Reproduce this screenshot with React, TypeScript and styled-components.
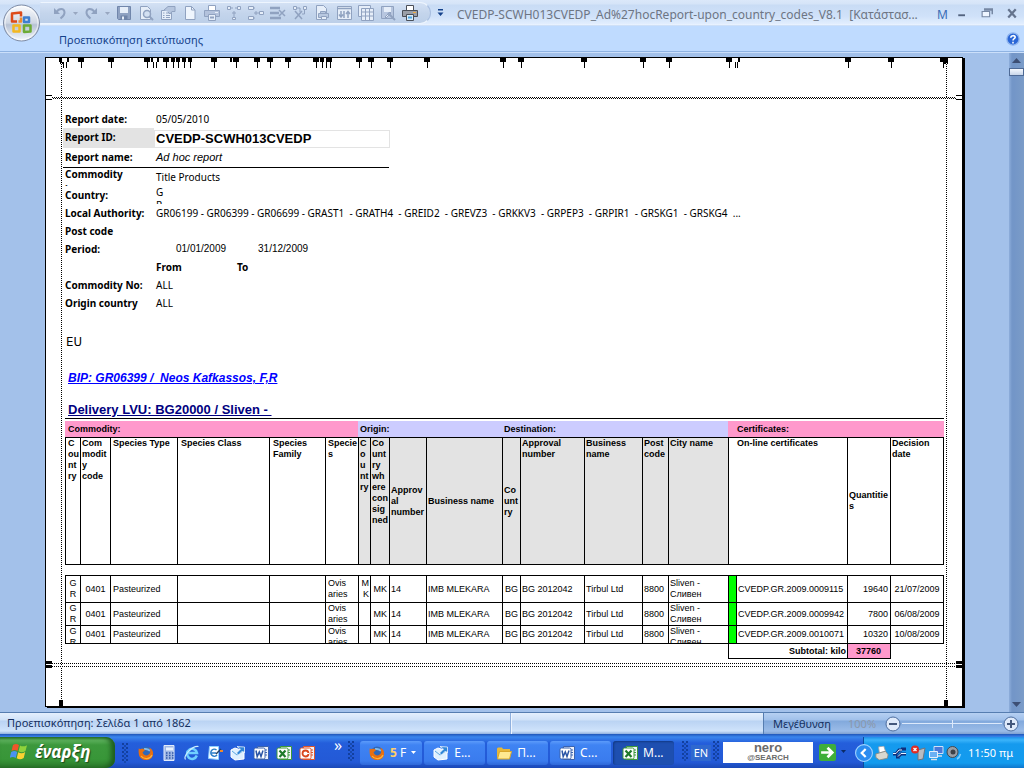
import React from "react";
import styled, { createGlobalStyle } from "styled-components";

const ui = `"Noto Sans", "Open Sans", sans-serif`;
const sans = `"Liberation Sans", Arial, sans-serif`;
const PINK = "#ff99cc";
const LAVENDER = "#ccccff";
const GREY = "#e3e3e3";

const Global = createGlobalStyle`
  *, *::before, *::after { box-sizing: border-box; }
  body { margin: 0; font-family: ${ui}; font-size: 11px; color: #000; }
  button { border: 0; padding: 0; background: none; font: inherit; color: inherit; }
  a { color: inherit; }
`;

const App = styled.div`
  min-height: 100vh;
  display: flex;
  flex-direction: column;
  background: #a3c1ea;
`;

/* ---------- window header ---------- */

const Header = styled.header`
  position: relative;
  background: #bfdbff;
`;

const TitleBar = styled.div`
  height: 26px;
  display: flex;
  align-items: center;
  padding-left: 40px;
  background: linear-gradient(#dbe8fa 0, #d5e4f8 4px, #c9dcf5 5px, #cfe1f9 16px, #e2eefe 24px, #eef5ff 25px, #b0cbef 26px);
`;

const QuickAccess = styled.div`
  height: 22px;
  display: flex;
  align-items: center;
  padding: 0 9px 0 10px;
  background: linear-gradient(#d3e1f4, #c4d5ec 50%, #bccfe8);
  border: 1px solid #a9bfe0;
  border-color: #eef5fe #a9bfe0 #eef5fe transparent;
  border-radius: 0 11px 11px 0;
`;

const ToolButton = styled.button<{ $w?: number }>`
  width: ${(p) => p.$w ?? 22}px;
  height: 18px;
  display: flex;
  align-items: center;
  justify-content: center;
`;

const Overflow = styled.button`
  width: 18px;
  height: 20px;
  display: flex;
  align-items: center;
  justify-content: center;
`;

const WindowTitle = styled.div`
  flex: 1;
  min-width: 0;
  display: flex;
  justify-content: space-between;
  padding: 4px 0 0 8px;
  color: #6d7583;
  font-size: 12px;
  line-height: 20px;
  white-space: pre;
  overflow: hidden;
`;

const AppName = styled.span`
  color: #3a6db5;
  width: 12px;
  overflow: hidden;
`;

const WindowButtons = styled.div`
  display: flex;
  width: 75px;
  justify-content: space-around;
`;

const Orb = styled.button`
  position: absolute;
  left: 2px;
  top: 3px;
  width: 40px;
  height: 40px;
`;

const TabRow = styled.nav`
  height: 26px;
  display: flex;
  align-items: center;
  justify-content: space-between;
  padding: 0 4px 0 59px;
  color: #15428b;
  border-bottom: 1px solid #8fb3e2;
  box-shadow: 0 1px 0 #cbdffa;
`;

const Tab = styled.button`
  line-height: 16px;
  padding-top: 3px;
`;

const HelpButton = styled.button`
  width: 14px;
  height: 14px;
  display: flex;
`;

/* ---------- preview workspace ---------- */

const Workspace = styled.main`
  flex: 1;
  display: flex;
`;

const Sheet = styled.section`
  position: relative;
  flex: 1;
  margin: 5px 46px 5px 45px;
  background: #fff;
  border: 1px solid #000;
  box-shadow: 2px 1px 0 #000;
  padding: 53px 18px 46px 17px;
`;

const VGuide = styled.i<{ $side: "left" | "right" }>`
  position: absolute;
  top: 4px;
  bottom: 0;
  width: 1px;
  ${(p) => p.$side}: 15px;
  background: repeating-linear-gradient(#000 0 1px, #fff 1px 2px);
  &::after {
    content: "";
    position: absolute;
    left: -2px;
    bottom: 0;
    width: 4px;
    height: 6px;
    background: #000;
  }
`;

const HGuide = styled.i<{ $shift?: boolean }>`
  display: block;
  height: 1px;
  background: repeating-linear-gradient(90deg, #000 0 1px, #fff 1px 2px);
  background-position-x: ${(p) => (p.$shift ? 1 : 0)}px;
`;

const TopGuides = styled.div`
  position: absolute;
  top: 37px;
  left: 0;
  right: 0;
  height: 5px;
  padding: 2px 6px 0;
  &::before,
  &::after {
    content: "";
    position: absolute;
    top: 0;
    left: 0;
    width: 6px;
    height: 5px;
    border: solid #000;
    border-width: 1px 0;
  }
  &::after {
    left: auto;
    right: 0;
  }
`;

const BottomGuides = styled.div`
  position: absolute;
  bottom: 38px;
  left: 0;
  right: 0;
  height: 7px;
  display: flex;
  flex-direction: column;
  gap: 2px;
  padding: 2px 6px 0;
  &::before,
  &::after {
    content: "";
    position: absolute;
    top: 0;
    left: 0;
    width: 6px;
    height: 7px;
    border: solid #000;
    border-width: 3px 0;
  }
  &::after {
    left: auto;
    right: 0;
  }
`;

const Ruler = styled.svg`
  position: absolute;
  left: 0;
  top: 0;
`;

const ScrollBar = styled.div`
  width: 15px;
  display: flex;
  flex-direction: column;
  justify-content: space-between;
  align-items: center;
  background: linear-gradient(90deg, #8eaedb 0, #7396c8 3px, #7396c8 5px, #7b9cc8 15px);
`;

const ScrollButton = styled.button`
  width: 15px;
  height: 16px;
  display: flex;
  align-items: center;
  justify-content: center;
`;

const ScrollThumb = styled.div`
  width: 15px;
  height: 8px;
  background: linear-gradient(#f4f8fe, #c8d6ea);
  border: 1px solid #4e6a96;
`;

/* ---------- report ---------- */

const Info = styled.dl`
  margin: 0;
  font-size: 10px;
`;

const InfoRow = styled.div<{ $h?: number }>`
  display: grid;
  grid-template-columns: 91px 1fr;
  height: ${(p) => p.$h ?? 18}px;
  line-height: ${(p) => p.$h ?? 18}px;
`;

const InfoHead = styled.div`
  width: 326px;
  border-bottom: 1px solid #000;
`;

const Label = styled.dt<{ $shade?: boolean }>`
  padding-left: 2px;
  font-weight: bold;
  white-space: nowrap;
  background: ${(p) => (p.$shade ? GREY : "none")};
`;

const Value = styled.dd`
  margin: 0;
  padding-left: 2px;
  white-space: pre;
`;

const ReportId = styled(Value)`
  margin: 2px -1px 0 0;
  padding-left: 1px;
  border: 1px solid ${GREY};
  font: bold 13px/16px ${sans};
`;

const ReportName = styled(Value)`
  font-family: ${sans};
  font-size: 11px;
  font-style: italic;
`;

const Clipped = styled.div`
  height: 18px;
  overflow: hidden;
  line-height: 13px;
`;

const Dates = styled(Value)`
  display: flex;
  font-family: ${sans};
  padding-left: 22px;
  gap: 32px;
`;

const FromTo = styled(Value)`
  display: grid;
  grid-template-columns: 81px 1fr;
  font-weight: bold;
`;

const Region = styled.h2`
  margin: 20px 0 0 3px;
  font: 13px/20px "DejaVu Sans Condensed", "DejaVu Sans", sans-serif;
`;

const Bip = styled.a`
  display: block;
  margin: 16px 0 0 5px;
  color: #0000ff;
  font: italic bold 12px/20px ${sans};
  white-space: pre;
`;

const Delivery = styled.h3`
  margin: 14px 0 0 5px;
  color: #000080;
  font: bold 13px/16px ${sans};
  text-decoration: underline;
  white-space: pre;
`;

const DataTable = styled.table`
  margin-left: 2px;
  width: calc(100% - 2px);
  table-layout: fixed;
  border-spacing: 0;
  border-top: 1px solid #000;
  padding-top: 2px;
  font: 9px/11px ${sans};
  th,
  td {
    padding: 0;
  }
`;

const Band = styled.th<{ $bg: string; $pad?: number }>`
  height: 16px;
  text-align: left;
  background: ${(p) => p.$bg};
  && {
    padding-left: ${(p) => p.$pad ?? 2}px;
  }
`;

const HeadCell = styled.th<{ $shade?: boolean; $mid?: boolean; $pad?: number }>`
  height: 128px;
  border: solid #000;
  border-width: 1px 0 1px 1px;
  text-align: left;
  white-space: nowrap;
  vertical-align: ${(p) => (p.$mid ? "middle" : "top")};
  background: ${(p) => (p.$shade ? GREY : "#fff")};
  && {
    padding-left: ${(p) => p.$pad ?? 1}px;
  }
  &:last-child {
    border-right-width: 1px;
  }
`;

const Spacer = styled.td`
  height: 10px;
`;

const DataRow = styled.tr<{ $h: number }>`
  td {
    height: ${(p) => p.$h}px;
  }
  &:nth-last-child(2) td {
    border-bottom: 1px solid #000;
  }
`;

const Cell = styled.td<{ $align?: "left" | "center" | "right"; $pad?: number; $bg?: string }>`
  border-top: 1px solid #000;
  border-left: 1px solid #000;
  text-align: ${(p) => p.$align ?? "left"};
  white-space: nowrap;
  vertical-align: middle;
  background: ${(p) => p.$bg ?? "#fff"};
  && {
    padding: 0 ${(p) => p.$pad ?? 1}px;
  }
  &:last-child {
    border-right: 1px solid #000;
  }
`;

const Clip = styled.div<{ $max: number }>`
  max-height: ${(p) => p.$max}px;
  overflow: hidden;
`;

const Total = styled.td<{ $bg?: string; $align: "right" | "center" }>`
  height: 15px;
  border-left: 1px solid #000;
  border-bottom: 1px solid #000;
  font-weight: bold;
  text-align: ${(p) => p.$align};
  background: ${(p) => p.$bg ?? "#fff"};
  && {
    padding-right: 1px;
  }
`;

const AfterTotal = styled.td`
  border-left: 1px solid #000;
`;

/* ---------- status bar ---------- */

const StatusBar = styled.footer`
  height: 22px;
  display: flex;
  border-top: 1px solid #567db0;
  color: #15305f;
  line-height: 20px;
  background: linear-gradient(#e4effd 0, #d0e2f8 7px, #bad3f3 8px, #cfe3fb 18px, #8fb0de 21px);
`;

const StatusText = styled.div`
  flex: 2 1 0;
  padding-left: 7px;
  border-right: 1px solid #8fb0de;
`;

const StatusGap = styled.div`
  flex: 1 1 0;
  box-shadow: inset 1px 0 #eef5ff;
`;

const ZoomPane = styled.div`
  flex: 0 0 261px;
  display: flex;
  align-items: center;
  padding: 0 5px 0 9px;
  border-left: 1px solid #567db0;
  background: linear-gradient(#b6d0f2 0, #a0c0ea 7px, #82a9dc 8px, #9bbce8 18px, #7d9fd0 21px);
  gap: 1px;
`;

const ZoomLabel = styled.label`
  width: 74px;
`;

const ZoomValue = styled.output`
  width: 36px;
  color: #8b98ab;
`;

const RoundButton = styled.button`
  width: 16px;
  height: 16px;
  display: flex;
`;

const Slider = styled.input`
  flex: 1;
  width: 0;
  min-width: 0;
  margin: 0;
  height: 10px;
  appearance: none;
  background:
    linear-gradient(#dce9fb, #dce9fb) center / 1px 8px no-repeat,
    linear-gradient(#dce9fb, #dce9fb) center / 100% 1px no-repeat;
  &::-webkit-slider-thumb {
    appearance: none;
    width: 1px;
    height: 1px;
    opacity: 0;
  }
`;

/* ---------- taskbar ---------- */

const Taskbar = styled.div`
  height: 34px;
  display: flex;
  align-items: center;
  color: #fff;
  background: linear-gradient(#1f55b8 0, #3a86ee 3px, #2f72e4 6px, #245edb 9px, #2359d6 28px, #1a48b6 34px);
`;

const Start = styled.button`
  align-self: stretch;
  width: 115px;
  margin-top: 3px;
  display: flex;
  align-items: center;
  gap: 6px;
  padding: 0 0 2px 10px;
  border-radius: 0 9px 9px 0;
  background: linear-gradient(#2f7a2f 0, #5eb35e 3px, #3c983c 8px, #389638 22px, #2b7a2b 31px);
  box-shadow: inset -4px 0 5px #1e5c1e;
  font: italic bold 17px/24px ${ui};
  text-shadow: 1px 1px 1px #1c4a1c;
`;

const Grip = styled.i`
  flex: none;
  width: 6px;
  height: 20px;
  background:
    radial-gradient(circle at 1px 1px, #123f9e 1px, transparent 1px) 0 0 / 4px 4px,
    radial-gradient(circle at 3px 3px, #1749ae 1px, transparent 1px) 0 0 / 4px 4px;
`;

const Launch = styled.div`
  flex: none;
  display: flex;
  align-items: center;
  width: 213px;
  padding: 3px 0 0 7px;
`;

const LaunchButton = styled.button`
  width: 23px;
  height: 18px;
  display: flex;
  justify-content: center;
  align-items: center;
  &:first-of-type {
    margin-left: 6px;
  }
`;

const Chevron = styled.button`
  width: 20px;
  font-size: 16px;
  line-height: 12px;
  padding-bottom: 12px;
`;

const Tasks = styled.div`
  flex: 1;
  display: flex;
  gap: 2px;
  padding: 3px 0 0 6px;
  margin-right: 8px;
  max-width: 320px;
`;

const Task = styled.button<{ $active?: boolean }>`
  flex: 1;
  height: 24px;
  display: flex;
  align-items: center;
  gap: 5px;
  padding: 0 6px 0 9px;
  border-radius: 3px;
  white-space: nowrap;
  font-size: 12px;
  background: ${(p) =>
    p.$active ? "#1e4fb0" : "linear-gradient(#5c9bfa 0, #3f83f3 4px, #3a7bee 20px, #2f68d8 24px)"};
  box-shadow: ${(p) => (p.$active ? "inset 1px 1px 2px #123a86" : "none")};
  svg:last-child:not(:first-child) {
    margin-left: auto;
  }
`;

const Count = styled.b`
  color: #ffcf6b;
`;

const Lang = styled.button`
  width: 20px;
  margin: 3px 2px 0 3px;
  line-height: 16px;
  background: #2f68cf;
`;

const Nero = styled.a`
  width: 90px;
  height: 21px;
  margin: 3px 6px 0 4px;
  display: flex;
  flex-direction: column;
  align-items: center;
  justify-content: center;
  background: #fff;
  color: #6b6b6b;
  text-decoration: none;
  font: bold 13px/10px ${sans};
  small {
    font-size: 8px;
    line-height: 9px;
  }
`;

const GreenGo = styled.button`
  width: 17px;
  height: 17px;
  display: flex;
  margin-top: 3px;
`;

const GoMenu = styled.button`
  width: 14px;
  height: 16px;
  display: flex;
  align-items: center;
  justify-content: center;
`;

const Tray = styled.div`
  align-self: stretch;
  flex: 0 0 161px;
  margin-left: auto;
  margin-top: 3px;
  display: flex;
  align-items: center;
  border-left: 1px solid #0d4a9c;
  background: linear-gradient(#1f8ee8 0, #3bb4fa 3px, #159aee 7px, #129bee 26px, #0f76cc 31px);
`;

const TrayArrow = styled.button`
  width: 18px;
  height: 18px;
  margin-left: -9px;
  display: flex;
`;

const TrayIcon = styled.span`
  width: 18px;
  display: flex;
  justify-content: center;
`;

const Clock = styled.time`
  margin-left: 5px;
  white-space: nowrap;
`;

/* ---------- drawings ---------- */

type Kids = { children: React.ReactNode; s?: number };
const Svg = ({ children, s = 16 }: Kids) => (
  <svg width={s} height={s} viewBox="0 0 16 16" fill="none" aria-hidden="true">
    {children}
  </svg>
);

const Caret = ({ color = "#98a7c0" }: { color?: string }) => (
  <svg width="5" height="3" viewBox="0 0 5 3" aria-hidden="true">
    <path d="M0 0h5L2.500 3z" fill={color} />
  </svg>
);

const g = "#90a2c0";
const lite = "#e6eef9";

const UndoIcon = () => (
  <Svg>
    <path d="M2 3v6h6z" fill={g} />
    <path d="M4.500 7C7 3 12 3 12.500 7c.3 3-1.500 4.500-4 6.500" stroke={g} strokeWidth="2" />
  </Svg>
);
const RedoIcon = () => (
  <Svg>
    <path d="M14 3v6H8z" fill={g} />
    <path d="M11.500 7C9 3 4 3 3.500 7c-.3 3 1.500 4.500 4 6.500" stroke={g} strokeWidth="2" />
  </Svg>
);
const SaveIcon = () => (
  <Svg>
    <path d="M1.500 1.500h13v13h-12l-1-1z" fill="#8fa2c2" stroke="#7186ab" />
    <path d="M4 2h8v6H4z" fill={lite} />
    <path d="M4.500 10.500h7v4h-7z" fill="#6f84a8" />
    <path d="M6 11.500h2v3H6z" fill={lite} />
  </Svg>
);
const PreviewIcon = () => (
  <Svg>
    <path d="M2.500 1.500h7l3 3v10h-10z" fill={lite} stroke={g} />
    <circle cx="9" cy="9" r="3.500" fill="#d3e0f2" stroke={g} strokeWidth="1.500" />
    <path d="m11.500 11.500 3.500 3.500" stroke={g} strokeWidth="2" />
  </Svg>
);
const PropsIcon = () => (
  <Svg>
    <path d="M1.500 5.500h10v9h-10z" fill={lite} stroke={g} />
    <path d="M3 8h1.500M6 8h4M3 10.500h1.500M6 10.500h4M3 12.500h1.500M6 12.500h4" stroke={g} />
    <path d="M4 5 8 1.500h7v5h-3L10 9 8 7" fill="#b5c5de" stroke={g} />
  </Svg>
);
const PageIcon = () => (
  <Svg>
    <path d="M3.500 1.500h6l3.500 3.500v9.500H3.500z" fill="#eff5fd" stroke={g} />
    <path d="M9.500 1.500V5H13" stroke={g} />
  </Svg>
);
const PrinterIcon = ({ dark = false }: { dark?: boolean }) => {
  const c = dark ? "#4a4f58" : g;
  return (
    <Svg>
      <path d="M4.500 .5h7V6h-7z" fill="#fff" stroke={c} />
      <path d="M.5 5.500h15v6H.5z" fill={dark ? "#9a9fa8" : "#b3c2dc"} stroke={c} />
      <path d="M4.500 9.500h7v6h-7z" fill={dark ? "#d9edfb" : lite} stroke={c} />
      <path d="M11 7.500h3" stroke={dark ? "#f0a83c" : lite} />
      <path d="M6 12.500h4" stroke={dark ? "#4aa3e0" : g} strokeWidth="2" />
    </Svg>
  );
};
const SplitDown = () => (
  <Svg>
    <path d="M1.500 1.500h3v3h-3zM11.500 1.500h3v3h-3zM6.500 12.500h3v2h-3z" fill={lite} stroke={g} />
    <path d="M4.500 3H7M9 3h2.500M8 6v6M6 8h4" stroke={g} />
  </Svg>
);
const SplitRight = () => (
  <Svg>
    <path d="M.5 1.500h5v3h-5zM.5 11.500h5v3h-5zM11.500 6.500h4v3h-4z" fill={lite} stroke={g} />
    <path d="M5.500 3H7M5.500 13H7M6 8h5M8 6v4" stroke={g} />
  </Svg>
);
const DeleteRow = () => (
  <Svg>
    <path d="M0 3h10M0 8h9M0 13h11" stroke={g} strokeWidth="2.500" />
    <path d="m9 5 6 6m0-6-6 6" stroke={g} strokeWidth="1.500" />
  </Svg>
);
const DeleteCol = () => (
  <Svg>
    <path d="M1.500 1.500h3v3h-3zM11.500 1.500h3v3h-3z" fill={lite} stroke={g} />
    <path d="m3 6 7 8m0-8-7 8" stroke={g} strokeWidth="1.500" />
    <path d="M4.500 3H8v4M12.500 5v4H10" stroke={g} />
  </Svg>
);
const PagePrint = () => (
  <Svg>
    <path d="M2.500 .5h7l3 3v11h-10z" fill={lite} stroke={g} />
    <path d="M6.500 6.500h5v2h-5zM4.500 8.500h10v4h-10z" fill="#b8c8e0" stroke={g} />
    <path d="M7.500 11.500h5v3h-5z" fill={lite} stroke={g} />
  </Svg>
);
const ChartIcon = () => (
  <Svg>
    <path d="M1.500 1.500h14v13h-14z" fill={lite} stroke={g} />
    <path d="M2 3.500h13M5 6v6M3 9.500 5 12l2-2.500M8 6v7M12 13V7M10 9l2-2.500L14 9" stroke={g} strokeWidth="1.500" />
  </Svg>
);
const GridIcon = () => (
  <Svg>
    <path d="M.5 .5h12v11H.5z" fill={lite} stroke={g} />
    <path d="M3.500 3.500h12v12h-12z" fill={lite} stroke={g} />
    <path d="M3.500 7h12M3.500 11h12M7.500 3.500v12M11.500 3.500v12" stroke={g} />
  </Svg>
);
const DesignIcon = () => (
  <Svg>
    <path d="M1.500 1.500h12v12h-12z" fill="#b7c6df" stroke={g} />
    <path d="M4 2h7v5H4z" fill={lite} />
    <path d="m5 12 5-5 1 1-5 5z" fill={lite} stroke={g} />
    <path d="m8 8 7 7" stroke={g} strokeWidth="2" />
  </Svg>
);

const OfficeOrb = () => (
  <svg width="40" height="40" viewBox="0 0 40 40" fill="none" aria-hidden="true">
    <defs>
      <linearGradient id="orb" x1="0" y1="0" x2="0" y2="1">
        <stop offset="0" stopColor="#fbfcfe" />
        <stop offset=".5" stopColor="#cfd7e4" />
        <stop offset=".55" stopColor="#b7c2d4" />
        <stop offset="1" stopColor="#f4f8fd" />
      </linearGradient>
    </defs>
    <circle cx="19.500" cy="20" r="18" fill="url(#orb)" stroke="#7d8ba5" />
    <circle cx="19.500" cy="20" r="16.500" stroke="#fff" opacity=".7" />
    <g strokeWidth="2.500" strokeLinejoin="round">
      <path d="M15 18.500h-5v-8l9-1v4" stroke="#dd4a1a" />
      <path d="M16.500 18.500h2.500v-4" stroke="#f08b2a" />
      <path d="M22 14.500h5v4.500h-5z" stroke="#3f7fd0" />
      <path d="M11.500 22.500h6v6h-6z" stroke="#f3b81f" />
      <path d="M22 22.500h6.500v6l-6.500 .5z" stroke="#6cab35" />
    </g>
  </svg>
);

const Firefox = () => (
  <Svg>
    <circle cx="8" cy="8" r="6.500" fill="#2f68b8" />
    <path d="M6 4c2 0 4-1 6 2" stroke="#7cb8ee" strokeWidth="2" />
    <path d="M1 3c0 1 1 1.500 1.500 1C4 3.500 6 4 7 5L4.500 7.500C6 11 10 11.500 12 8c.5-2 0-4-1-5.500 3 1 4.500 4 4 7C14 17 2 17 .8 9 .5 6 .5 4 1 3z" fill="#e86f10" />
    <path d="M3 11c3 4 9 3.500 11-1" stroke="#fbb53a" strokeWidth="1.200" />
  </Svg>
);
const Calc = () => (
  <Svg>
    <path d="M3 .5h10v15H3z" fill="#9fb7e4" stroke="#e3ecfb" />
    <path d="M5 2.500h7v3H5z" fill="#e9f2ff" />
    <path d="M5 8h1.500M8 8h1.500M11 8h1.500M5 10.500h1.500M8 10.500h1.500M11 10.500h1.500M5 13h1.500M8 13h1.500M11 13h1.500" stroke="#3158a8" strokeWidth="1.500" />
  </Svg>
);
const Explorer = () => (
  <Svg>
    <path d="M12.800 10.500A5 5 0 1 1 13 8H4.500" stroke="#6fd0ff" strokeWidth="2.500" />
    <path d="M1.500 14.500C-1 11 8 .5 14.500 1.500" stroke="#cdeeff" strokeWidth="1.200" />
  </Svg>
);
const Compose = () => (
  <Svg>
    <path d="M2.500 1.500h9v13l-10-1z" fill="#fff" stroke="#8fd0ff" />
    <path d="M9.500 5a3.500 3.500 0 1 0 .5 5M4 8h5" stroke="#2b7fc9" strokeWidth="1.500" />
    <path d="m9 9 5-5" stroke="#27415f" strokeWidth="1.500" />
    <path d="M13 6h3" stroke="#f08b2a" strokeWidth="2" />
  </Svg>
);
const Mail = () => (
  <Svg>
    <path d="m1 5 4-2 9 3v8l-9 1-4-3z" fill="#dff0ff" stroke="#fff" />
    <path d="m2 6 5 4 6-4" stroke="#5aa6e0" />
    <path d="M7 1.500 14.500 2v6l-2-2-4 4-2-2 4-4z" fill="#2f86d8" stroke="#fff" strokeWidth=".7" />
  </Svg>
);
const OfficeDoc = ({ color, children }: { color: string; children: React.ReactNode }) => (
  <Svg>
    <path d="M4.500 1.500h11v13h-11z" fill="#eef2fa" stroke={color} />
    <path d="M12 5h2M12 7.500h2M12 10h2" stroke={color} />
    <rect x="1" y="3" width="11" height="11" rx="1.500" fill="#fff" stroke={color} />
    {children}
  </Svg>
);
const Word = () => (
  <OfficeDoc color="#3a62ae">
    <path d="m3 5.500 1.200 6L6.300 7l1.700 4.500L10 5.500" stroke="#2b55a5" strokeWidth="1.500" />
  </OfficeDoc>
);
const Excel = () => (
  <OfficeDoc color="#3f9a3a">
    <path d="m3.500 5.500 6 6.500M9.500 5.500 3.500 12" stroke="#1f7a2a" strokeWidth="2.200" />
  </OfficeDoc>
);
const Power = () => (
  <OfficeDoc color="#e0552a">
    <circle cx="6.500" cy="8.500" r="3" stroke="#d8461c" strokeWidth="1.800" />
    <path d="M6.500 8.500H10" stroke="#fff" />
  </OfficeDoc>
);
const Folder = () => (
  <Svg>
    <path d="M1 3.500 2 2.500h4l1 1.500h7v9H2l-1-1z" fill="#e6b73a" />
    <path d="M3.500 6.500h12l-2 7.500h-12z" fill="#ffe991" stroke="#d9a72b" />
  </Svg>
);
const Flag = () => (
  <svg width="19" height="19" viewBox="0 0 19 19" aria-hidden="true">
    <path d="M3 3c2-1.500 4-1.300 6 0L7.500 9C5.500 7.600 3.500 7.700 1.500 9z" fill="#f0562a" />
    <path d="M10 3.500c2 1.200 4 1.200 7-.3L15.500 9c-2.500 1.500-4.500 1.500-7 .3z" fill="#8fd23c" />
    <path d="M1.200 10c2-1.300 4-1.300 6 0l-1.500 6c-2-1.400-4-1.300-6 0z" fill="#4a92f0" />
    <path d="M8.200 10.300c2.500 1.200 4.500 1.200 7-.3l-1.500 6c-2.500 1.500-4.500 1.500-7 .3z" fill="#fbd232" />
  </svg>
);

/* Column handles along the upper edge of the page, measured from its left side. */
const handles = [
  35, 65, 101, 120, 168, 190, 211, 224, 242, 270, 313, 325, 344, 381, 457, 475, 538, 597, 623, 683, 802, 845, 897,
];
const narrowHandles = [127, 132, 138, 144, 276, 284];
const halfHandles = [21, 105, 111, 184, 280, 692];
const stems = [17, 20, 107, 110, 280, 689, 691];

const tick = (x: number, w: number) => (
  <g key={x}>
    <rect x={x - w / 2} y="0" width={w} height="4" />
    <rect x={x} y="4" width="1" height="6" />
  </g>
);

const tools: [string, React.ReactNode][] = [
  ["Αποθήκευση", <SaveIcon />],
  ["Προεπισκόπηση", <PreviewIcon />],
  ["Ιδιότητες", <PropsIcon />],
  ["Νέα σελίδα", <PageIcon />],
  ["Γρήγορη εκτύπωση", <PrinterIcon />],
  ["Εισαγωγή στηλών", <SplitDown />],
  ["Εισαγωγή γραμμών", <SplitRight />],
  ["Διαγραφή γραμμών", <DeleteRow />],
  ["Διαγραφή στηλών", <DeleteCol />],
  ["Διαμόρφωση σελίδας", <PagePrint />],
  ["Προβολή γραφήματος", <ChartIcon />],
  ["Πλέγμα", <GridIcon />],
  ["Σχεδίαση", <DesignIcon />],
  ["Εκτύπωση", <PrinterIcon dark />],
];

const widths = [15, 30, 67, 92, 56, 33, 12, 19, 37, 76, 18, 64, 58, 26, 60, 8, 111, 43, 54];

type Head = { lines: string[]; shade?: boolean; mid?: boolean; pad?: number; span?: number };
const heads: Head[] = [
  { lines: ["C", "ou", "nt", "ry"], pad: 2 },
  { lines: ["Com", "modit", "y", "code"] },
  { lines: ["Species Type"], pad: 2 },
  { lines: ["Species Class"], pad: 3 },
  { lines: ["Species", "Family"], pad: 3 },
  { lines: ["Specie", "s"], pad: 2 },
  { lines: ["C", "o", "u", "nt", "ry"], shade: true },
  { lines: ["Co", "unt", "ry", "wh", "ere", "con", "sig", "ned"], shade: true },
  { lines: ["Approv", "al", "number"], shade: true, mid: true },
  { lines: ["Business name"], shade: true, mid: true },
  { lines: ["Co", "unt", "ry"], shade: true, mid: true },
  { lines: ["Approval", "number"], shade: true },
  { lines: ["Business", "name"], shade: true },
  { lines: ["Post", "code"], shade: true },
  { lines: ["City name"], shade: true },
  { lines: ["On-line certificates"], pad: 8, span: 2 },
  { lines: ["Quantitie", "s"], mid: true },
  { lines: ["Decision", "date"] },
];

const rows = [
  { h: 27, from: true, cert: "CVEDP.GR.2009.0009115", qty: "19640", date: "21/07/2009" },
  { h: 23, from: false, cert: "CVEDP.GR.2009.0009942", qty: "7800", date: "06/08/2009" },
  { h: 19, from: false, cert: "CVEDP.GR.2009.0010071", qty: "10320", date: "10/08/2009" },
];

const Lines = ({ of }: { of: string[] }) => (
  <>
    {of.map((t, i) => (
      <React.Fragment key={i}>
        {i > 0 && <br />}
        {t}
      </React.Fragment>
    ))}
  </>
);

const Round = ({ plus = false }: { plus?: boolean }) => (
  <Svg>
    <circle cx="8" cy="8" r="7" fill="#dfeafa" stroke="#4d6d9f" />
    <path d={plus ? "M4 8h8M8 4v8" : "M4 8h8"} stroke="#44587c" strokeWidth="2" />
  </Svg>
);

export default function PrintPreview() {
  return (
    <App>
      <Global />
      <Header>
        <TitleBar>
          <QuickAccess>
            <ToolButton $w={18} aria-label="Αναίρεση"><UndoIcon /></ToolButton>
            <ToolButton $w={12} aria-label="Λίστα αναίρεσης"><Caret /></ToolButton>
            <ToolButton $w={20} aria-label="Επανάληψη"><RedoIcon /></ToolButton>
            <ToolButton $w={12} aria-label="Λίστα επανάληψης"><Caret /></ToolButton>
            {tools.map(([name, icon]) => (
              <ToolButton key={name} aria-label={name}>{icon}</ToolButton>
            ))}
          </QuickAccess>
          <Overflow aria-label="Προσαρμογή">
            <svg width="7" height="8" viewBox="0 0 7 8" aria-hidden="true">
              <path d="M1 0h5v1.500H1zM0.500 3.500h6L3.500 7z" fill="#15428b" />
            </svg>
          </Overflow>
          <WindowTitle>
            <span>{"CVEDP-SCWH013CVEDP_Ad%27hocReport-upon_country_codes_V8.1  [Κατάστασ..."}</span>
            <AppName>M</AppName>
          </WindowTitle>
          <WindowButtons>
            <ToolButton aria-label="Ελαχιστοποίηση">
              <Svg s={12}><path d="M3 11h9" stroke="#53637f" strokeWidth="2.500" /></Svg>
            </ToolButton>
            <ToolButton aria-label="Επαναφορά">
              <Svg s={12}>
                <path d="M4 2.500h11v7M4 4h11" stroke="#7687a3" strokeWidth="2" />
                <path d="M1.500 6h10v7h-10z" fill="#eef5ff" stroke="#7687a3" strokeWidth="1.500" />
              </Svg>
            </ToolButton>
            <ToolButton aria-label="Κλείσιμο">
              <Svg s={12}><path d="m3 3 10 11M13 3 3 14" stroke="#65748e" strokeWidth="3" /></Svg>
            </ToolButton>
          </WindowButtons>
        </TitleBar>
        <TabRow>
          <Tab>Προεπισκόπηση εκτύπωσης</Tab>
          <HelpButton aria-label="Βοήθεια">
            <Svg s={14}>
              <circle cx="8" cy="8" r="7" fill="#2a66d6" stroke="#8fb4ee" strokeWidth="1.500" />
              <path d="M5.500 6.500C5.500 3.500 10.500 3.500 10.500 6c0 1.800-2.500 1.500-2.500 3.700M8 11v2" stroke="#fff" strokeWidth="1.800" />
            </Svg>
          </HelpButton>
        </TabRow>
        <Orb aria-label="Κουμπί Office"><OfficeOrb /></Orb>
      </Header>

      <Workspace>
        <Sheet>
          <Info>
            <InfoHead>
              <InfoRow $h={17}>
                <Label>Report date:</Label>
                <Value>05/05/2010</Value>
              </InfoRow>
              <InfoRow $h={19}>
                <Label $shade>Report ID:</Label>
                <ReportId>CVEDP-SCWH013CVEDP</ReportId>
              </InfoRow>
              <InfoRow $h={20}>
                <Label>Report name:</Label>
                <ReportName>Ad hoc report</ReportName>
              </InfoRow>
            </InfoHead>
            <InfoRow>
              <Label><Clipped>Commodity<br />:</Clipped></Label>
              <Value>Title Products</Value>
            </InfoRow>
            <InfoRow>
              <Label>Country:</Label>
              <Value><Clipped>G<br />R</Clipped></Value>
            </InfoRow>
            <InfoRow>
              <Label>Local Authority:</Label>
              <Value>
                {"GR06199 - GR06399 - GR06699 - GRAST1  - GRATH4  - GREID2  - GREVZ3  - GRKKV3  - GRPEP3  - GRPIR1  - GRSKG1  - GRSKG4  ..."}
              </Value>
            </InfoRow>
            <InfoRow>
              <Label>Post code</Label>
              <Value />
            </InfoRow>
            <InfoRow>
              <Label>Period:</Label>
              <Dates>
                <span>01/01/2009</span>
                <span>31/12/2009</span>
              </Dates>
            </InfoRow>
            <InfoRow>
              <Label />
              <FromTo>
                <span>From</span>
                <span>To</span>
              </FromTo>
            </InfoRow>
            <InfoRow>
              <Label>Commodity No:</Label>
              <Value>ALL</Value>
            </InfoRow>
            <InfoRow>
              <Label>Origin country</Label>
              <Value>ALL</Value>
            </InfoRow>
          </Info>

          <Region>EU</Region>
          <Bip href="#bip">{"BIP: GR06399 /  Neos Kafkassos, F,R"}</Bip>
          <Delivery>{"Delivery LVU: BG20000 / Sliven - "}</Delivery>

          <DataTable>
            <colgroup>
              {widths.map((w, i) => (
                <col key={i} width={w} />
              ))}
            </colgroup>
            <thead>
              <tr>
                <Band $bg={PINK} $pad={3} colSpan={6}>Commodity:</Band>
                <Band $bg={LAVENDER} colSpan={4}>Origin:</Band>
                <Band $bg={LAVENDER} colSpan={5}>Destination:</Band>
                <Band $bg={PINK} $pad={9} colSpan={4}>Certificates:</Band>
              </tr>
              <tr>
                {heads.map((h, i) => (
                  <HeadCell key={i} $shade={h.shade} $mid={h.mid} $pad={h.pad} colSpan={h.span}>
                    <Lines of={h.lines} />
                  </HeadCell>
                ))}
              </tr>
            </thead>
            <tbody>
              <tr>
                <Spacer colSpan={19} />
              </tr>
              {rows.map((r) => (
                <DataRow key={r.cert} $h={r.h}>
                  <Cell $align="center"><Clip $max={r.h === 19 ? 17 : 22}><Lines of={["G", "R"]} /></Clip></Cell>
                  <Cell $align="center">0401</Cell>
                  <Cell $pad={2}>Pasteurized</Cell>
                  <Cell />
                  <Cell />
                  <Cell $pad={2}><Clip $max={r.h === 19 ? 17 : 22}><Lines of={["Ovis", "aries"]} /></Clip></Cell>
                  <Cell $align="right">{r.from && <Lines of={["M", "K"]} />}</Cell>
                  <Cell $align="right" $pad={2}>MK</Cell>
                  <Cell>14</Cell>
                  <Cell>IMB MLEKARA</Cell>
                  <Cell $align="right" $pad={2}>BG</Cell>
                  <Cell>BG 2012042</Cell>
                  <Cell>Tirbul Ltd</Cell>
                  <Cell>8800</Cell>
                  <Cell><Clip $max={r.h === 19 ? 17 : 22}><Lines of={["Sliven -", "Сливен"]} /></Clip></Cell>
                  <Cell $bg="#00ff00" />
                  <Cell>{r.cert}</Cell>
                  <Cell $align="right" $pad={2}>{r.qty}</Cell>
                  <Cell $align="center">{r.date}</Cell>
                </DataRow>
              ))}
              <tr>
                <td colSpan={15} />
                <Total $align="right" colSpan={2}>Subtotal: kilo</Total>
                <Total $align="center" $bg={PINK}>37760</Total>
                <AfterTotal />
              </tr>
            </tbody>
          </DataTable>

          <Ruler width="916" height="12" aria-hidden="true">
            <path d="M13 0h3v4h2v2h-4V4h-1zM898 0h4v6h-4z" />
            {handles.map((x) => tick(x, 6))}
            {narrowHandles.map((x) => tick(x, 4))}
            {halfHandles.map((x) => (
              <rect key={x} x={x} y="0" width="2" height="4" />
            ))}
            {stems.map((x) => (
              <rect key={x} x={x} y="4" width="1" height="6" />
            ))}
          </Ruler>
          <VGuide $side="left" />
          <VGuide $side="right" />
          <TopGuides>
            <HGuide />
            <HGuide $shift />
          </TopGuides>
          <BottomGuides>
            <HGuide />
            <HGuide />
          </BottomGuides>
        </Sheet>
        <ScrollBar>
          <div>
            <ScrollButton aria-label="Πάνω">
              <svg width="9" height="5" aria-hidden="true"><path d="M0 5 4.500 0 9 5z" fill="#3d4f74" /></svg>
            </ScrollButton>
            <ScrollThumb />
          </div>
          <ScrollButton aria-label="Κάτω">
            <svg width="9" height="5" aria-hidden="true"><path d="M0 0h9L4.500 5z" fill="#3d4f74" /></svg>
          </ScrollButton>
        </ScrollBar>
      </Workspace>

      <StatusBar>
        <StatusText>Προεπισκόπηση: Σελίδα 1 από 1862</StatusText>
        <StatusGap />
        <ZoomPane>
          <ZoomLabel htmlFor="zoom">Μεγέθυνση</ZoomLabel>
          <ZoomValue>100%</ZoomValue>
          <RoundButton aria-label="Σμίκρυνση"><Round /></RoundButton>
          <Slider id="zoom" type="range" min="10" max="400" defaultValue="100" />
          <RoundButton aria-label="Μεγέθυνση προβολής"><Round plus /></RoundButton>
        </ZoomPane>
      </StatusBar>

      <Taskbar>
        <Start><Flag />έναρξη</Start>
        <Launch>
          <Grip />
          <LaunchButton aria-label="Firefox"><Firefox /></LaunchButton>
          <LaunchButton aria-label="Αριθμομηχανή"><Calc /></LaunchButton>
          <LaunchButton aria-label="Internet Explorer"><Explorer /></LaunchButton>
          <LaunchButton aria-label="Σύνταξη"><Compose /></LaunchButton>
          <LaunchButton aria-label="Αλληλογραφία"><Mail /></LaunchButton>
          <LaunchButton aria-label="Word"><Word /></LaunchButton>
          <LaunchButton aria-label="Excel"><Excel /></LaunchButton>
          <LaunchButton aria-label="PowerPoint"><Power /></LaunchButton>
        </Launch>
        <Chevron aria-label="Περισσότερα">»</Chevron>
        <Grip />
        <Tasks>
          <Task><Firefox /><span><Count>5</Count> F</span><Caret color="#fff" /></Task>
          <Task><Mail />E...</Task>
          <Task><Folder />Π...</Task>
          <Task><Word />C...</Task>
          <Task $active><Excel />M...</Task>
        </Tasks>
        <Grip />
        <Lang>EN</Lang>
        <Grip />
        <Nero href="#search">nero<small>@SEARCH</small></Nero>
        <GreenGo aria-label="Αναζήτηση">
          <Svg s={17}>
            <rect x="0" y="0" width="16" height="16" rx="2" fill="#3fae3a" />
            <path d="M2 8h10M8 3.500 12.500 8 8 12.500" stroke="#fff" strokeWidth="2.500" />
          </Svg>
        </GreenGo>
        <GoMenu aria-label="Επιλογές αναζήτησης"><Caret color="#0b2a66" /></GoMenu>
        <Tray>
          <TrayArrow aria-label="Εμφάνιση κρυφών εικονιδίων">
            <Svg s={18}>
              <circle cx="8" cy="8" r="7.500" fill="#2b8cf0" stroke="#9fd2ff" />
              <path d="M9.500 4.500 6 8l3.500 3.500" stroke="#fff" strokeWidth="2" />
            </Svg>
          </TrayArrow>
          <TrayIcon>
            <Svg s={14}>
              <path d="m4 1 6-1 2 6-7 2z" fill="#fff" stroke="#9aa3ad" />
              <path d="m1 9 11-3 3 4-1 4-9 2-4-3z" fill="#d8d8d0" stroke="#8c8c84" />
            </Svg>
          </TrayIcon>
          <TrayIcon>
            <Svg>
              <path d="M1 9h3l3-4h3M6 12l3-3h5M9 4h5M4 12h4" stroke="#0f2e7c" strokeWidth="3" />
              <path d="M1 8.500h3l3-3.500h3M6 11.500l3-3h5" stroke="#e8f4ff" />
            </Svg>
          </TrayIcon>
          <TrayIcon>
            <Svg>
              <path d="m8 5 7-2-2 11-5 1z" fill="#b9bcc2" stroke="#6f747d" />
              <circle cx="5" cy="4.500" r="4" fill="#e02a22" />
              <path d="m3.500 3 3 3m0-3-3 3" stroke="#fff" strokeWidth="1.300" />
            </Svg>
          </TrayIcon>
          <TrayIcon>
            <Svg>
              <path d="M6 1.500h9v7H6z" fill="#4a78d8" stroke="#cfe0f8" />
              <path d="M1.500 6.500h8v6h-8z" fill="#6ab0f4" stroke="#e4eefc" />
              <path d="M3 14.500h6M10 11h4" stroke="#d6dde8" strokeWidth="1.500" />
            </Svg>
          </TrayIcon>
          <TrayIcon>
            <Svg>
              <circle cx="6.500" cy="7" r="5.500" fill="#9a9fa6" stroke="#44484e" />
              <circle cx="7" cy="7" r="2.500" fill="#3d4147" />
              <path d="M11 14c2-1 3-2.500 3.500-5" stroke="#7fd0ff" strokeWidth="1.500" />
            </Svg>
          </TrayIcon>
          <Clock>11:50 πμ</Clock>
        </Tray>
      </Taskbar>
    </App>
  );
}
